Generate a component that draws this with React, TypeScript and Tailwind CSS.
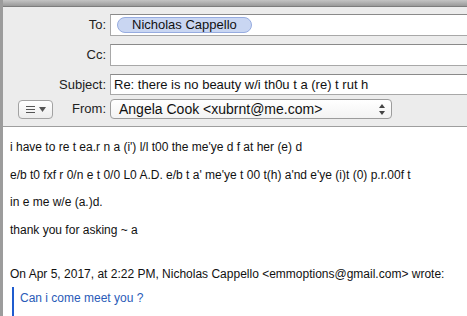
import React from 'react';

const labelFont = { fontFamily: '"Liberation Sans", Arial, sans-serif' };

const HeaderRow: React.FC<{ label: string; className?: string; children?: React.ReactNode }> = ({ label, className, children }) => (
  <div className={`flex items-center ${className ?? ''}`}>
    <div className="w-[104px] shrink-0 text-right text-[13px] text-[#222] pr-[1px]">{label}</div>
    <div className="ml-[3px] flex-1 -mr-2 h-full bg-white border border-[#a8a8a8] border-t-[#8a8a8a] flex items-center">
      {children}
    </div>
  </div>
);

const App: React.FC = () => {
  return (
    <div
      className="w-[467px] h-[316px] overflow-hidden flex flex-col bg-white border-l-[3px] border-[#9c9c9c]"
      style={labelFont}
    >
      {/* window chrome strip */}
      <div className="h-[7px] shrink-0 bg-gradient-to-b from-[#c4c4c4] to-[#9a9a9a] border-b border-[#7d7d7d]" />

      {/* header fields */}
      <div className="shrink-0 bg-[#ececec] border-b border-[#9e9e9e] pb-[7px]">
        <HeaderRow label="To:" className="mt-[7px] h-[22px]">
          <span className="ml-[6px] h-[16px] px-[14px] flex items-center rounded-full bg-[#c9d6f2] border border-[#97ace0] text-[13px] text-[#111]">
            Nicholas Cappello
          </span>
        </HeaderRow>
        <HeaderRow label="Cc:" className="mt-[8px] h-[22px]" />
        <HeaderRow label="Subject:" className="mt-[8px] h-[21px]">
          <span className="ml-[3px] text-[13px] text-[#111] whitespace-nowrap">Re: there is no beauty w/i th0u t a (re) t rut h</span>
        </HeaderRow>

        <div className="flex items-center mt-[4px] h-[20px]">
          <div className="w-[104px] shrink-0 flex items-center justify-between pl-[15px] pr-[1px]">
            <button className="w-[35px] h-[19px] rounded-[4px] border border-[#a2a2a2] bg-gradient-to-b from-white to-[#ececec] flex items-center justify-center gap-[4px]">
              <svg width="9" height="7" viewBox="0 0 9 7">
                <rect x="0" y="0" width="9" height="1" fill="#555" />
                <rect x="0" y="3" width="9" height="1" fill="#555" />
                <rect x="0" y="6" width="9" height="1" fill="#555" />
              </svg>
              <svg width="7" height="5" viewBox="0 0 7 5">
                <path d="M0 0 L7 0 L3.5 5 Z" fill="#555" />
              </svg>
            </button>
            <span className="text-[13px] text-[#222]">From:</span>
          </div>
          <div className="ml-[3px] w-[282px] h-[20px] rounded-[4px] border border-[#9c9c9c] bg-gradient-to-b from-white to-[#f3f3f3] flex items-center justify-between pl-[8px] pr-[6px]">
            <span className="text-[14px] text-[#111] whitespace-nowrap">Angela Cook &lt;xubrnt@me.com&gt;</span>
            <svg width="6" height="11" viewBox="0 0 6 11">
              <path d="M0 4 L6 4 L3 0 Z" fill="#444" />
              <path d="M0 7 L6 7 L3 11 Z" fill="#444" />
            </svg>
          </div>
        </div>
      </div>

      {/* message body */}
      <div className="flex-1 pl-[7px] pt-[13px] text-[12px] leading-[14px] text-[#111]">
        <div className="flex flex-col gap-[13.5px]">
          <p>i have to re t ea.r n a (i') l/l t00 the me'ye d f at her (e) d</p>
          <p>e/b t0 fxf r 0/n e t 0/0 L0 A.D. e/b t a' me'ye t 00 t(h) a'nd e'ye (i)t (0) p.r.00f t</p>
          <p>in e me w/e (a.)d.</p>
          <p>thank you for asking ~ a</p>
        </div>
        <p className="mt-[30px] whitespace-nowrap">On Apr 5, 2017, at 2:22 PM, Nicholas Cappello &lt;emmoptions@gmail.com&gt; wrote:</p>
        <div className="mt-[6px] ml-[2px] pt-[4px] pb-[20px] pl-[6px] border-l-[2px] border-[#1f5ccf]">
          <p className="text-[#2a5bb8]">Can i come meet you ?</p>
        </div>
      </div>
    </div>
  );
};

export default App;
